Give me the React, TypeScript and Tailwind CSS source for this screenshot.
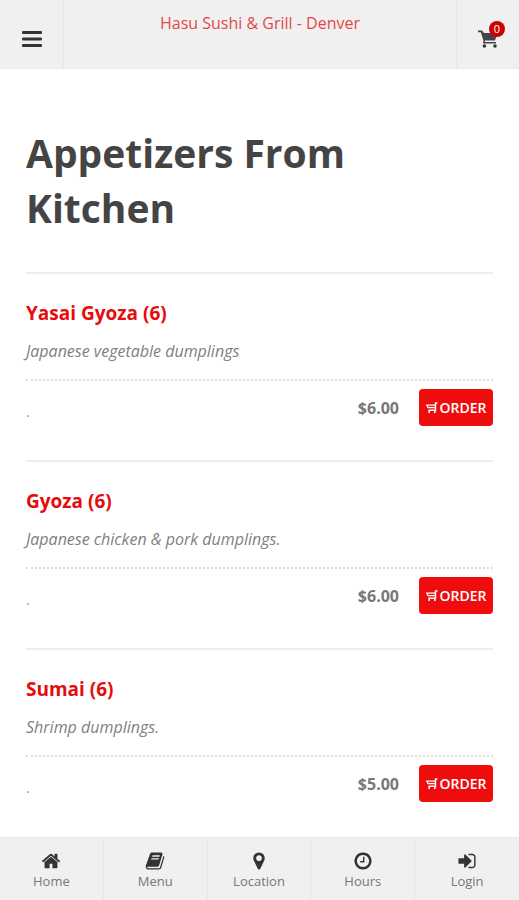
import type { ReactNode } from "react";

const dishes = [
  { name: "Yasai Gyoza (6)", note: "Japanese vegetable dumplings", price: "$6.00" },
  { name: "Gyoza (6)", note: "Japanese chicken & pork dumplings.", price: "$6.00" },
  { name: "Sumai (6)", note: "Shrimp dumplings.", price: "$5.00" },
];

const tabs = [
  {
    label: "Home",
    path: "M1472 992v480q0 26-19 45t-45 19h-384v-384h-256v384h-384q-26 0-45-19t-19-45v-480q0-1 .5-3t.5-3l575-474 575 474q1 2 1 6zm223-69l-62 74q-8 9-21 11h-3q-13 0-21-7l-692-577-692 577q-12 8-24 7-13-2-21-11l-62-74q-8-10-7-23.5t11-21.5l719-599q32-26 76-26t76 26l244 204v-195q0-14 9-23t23-9h192q14 0 23 9t9 23v408l219 182q10 8 11 21.5t-7 23.5z",
  },
  {
    label: "Menu",
    path: "M1703 478q40 57 18 129l-275 906q-19 64-76.5 107.5t-122.5 43.5h-923q-77 0-148.5-53.5t-99.5-131.5q-24-67-2-127 0-4 3-27t4-37q1-8-3-21.5t-3-19.5q2-11 8-21t16.5-23.5 16.5-23.5q23-38 45-91.5t30-91.5q3-10 .5-30t-.5-28q3-11 17-28t17-23q21-36 42-92t25-90q1-9-2.5-32t.5-28q4-13 22-30.5t22-22.5q19-26 42.5-84.5t27.5-96.5q1-8-3-25.5t-2-26.5q2-8 9-18t18-23 17-21q8-12 16.5-30.5t15-35 16-36 19.5-32 26.5-23.5 36-11.5 47.5 5.5l-1 3q38-9 51-9h761q74 0 114 56t18 130l-274 906q-36 119-71.5 153.5t-128.5 34.5h-869q-27 0-38 15-11 16-1 43 24 70 144 70h923q29 0 56-15.5t35-41.5l300-987q7-22 5-57 38 15 59 43zm-1064 2q-4 13 2 22.5t20 9.5h608q13 0 25.5-9.5t16.5-22.5l21-64q4-13-2-22.5t-20-9.5h-608q-13 0-25.5 9.5t-16.5 22.5zm-83 256q-4 13 2 22.5t20 9.5h608q13 0 25.5-9.5t16.5-22.5l21-64q4-13-2-22.5t-20-9.5h-608q-13 0-25.5 9.5t-16.5 22.5z",
  },
  {
    label: "Location",
    path: "M1152 640q0-106-75-181t-181-75-181 75-75 181 75 181 181 75 181-75 75-181zm256 0q0 109-33 179l-364 774q-16 33-47.5 52t-67.5 19-67.5-19-46.5-52l-365-774q-33-70-33-179 0-212 150-362t362-150 362 150 150 362z",
  },
  {
    label: "Hours",
    path: "M1024 544v448q0 14-9 23t-23 9h-320q-14 0-23-9t-9-23v-64q0-14 9-23t23-9h224v-352q0-14 9-23t23-9h64q14 0 23 9t9 23zm416 352q0-148-73-273t-198-198-273-73-273 73-198 198-73 273 73 273 198 198 273 73 273-73 198-198 73-273zm224 0q0 209-103 385.5t-279.5 279.5-385.5 103-385.5-103-279.5-279.5-103-385.5 103-385.5 279.5-279.5 385.5-103 385.5 103 279.5 279.5 103 385.5z",
  },
  {
    label: "Login",
    path: "M1312 896q0 26-19 45l-544 544q-19 19-45 19t-45-19-19-45v-288h-448q-26 0-45-19t-19-45v-384q0-26 19-45t45-19h448v-288q0-26 19-45t45-19 45 19l544 544q19 19 19 45zm352-352v704q0 119-84.5 203.5t-203.5 84.5h-320q-13 0-22.5-9.5t-9.5-22.5q0-4-1-20t-.5-26.5 3-23.5 10-19.5 20.5-6.5h320q66 0 113-47t47-113v-704q0-66-47-113t-113-47h-312l-11.5-1-11.5-3-8-5.5-7-9-2-13.5q0-4-1-20t-.5-26.5 3-23.5 10-19.5 20.5-6.5h320q119 0 203.5 84.5t84.5 203.5z",
  },
];

function HeaderButton({ label, children }: { label: string; children: ReactNode }) {
  return (
    <button type="button" aria-label={label} className="flex h-full w-full items-center justify-center pt-[10px]">
      {children}
    </button>
  );
}

function OrderCart() {
  return (
    <svg viewBox="0 0 12 12" className="size-3" fill="none" stroke="currentColor" aria-hidden="true">
      <path d="M11.5 1H9.5V8.2H2.5" strokeWidth="1.4" />
      <path d="M9 3.2H0.8L2 5.7H9" strokeWidth="1.2" />
      <path d="M3.2 8V11M8.8 8V11" strokeWidth="1.6" />
    </svg>
  );
}

export default function App() {
  return (
    <div className="flex h-screen flex-col bg-white font-['Open_Sans',sans-serif] text-[#777]">
      <header className="flex h-[69px] shrink-0 border-b border-[#ebebeb] bg-[#f0f0f0]">
        <div className="w-16 border-r border-[#e6e6e6]">
          <HeaderButton label="Open menu">
            <svg viewBox="0 0 20 18" className="h-[18px] w-5" fill="#333" aria-hidden="true">
              <rect y="1" width="20" height="3" rx="1" />
              <rect y="7.5" width="20" height="3" rx="1" />
              <rect y="14" width="20" height="3" rx="1" />
            </svg>
          </HeaderButton>
        </div>
        <p className="flex-1 pt-[11px] text-center text-base text-[#e34848]">
          Hasu Sushi &amp; Grill - Denver
        </p>
        <div className="w-[63px] border-l border-[#e6e6e6]">
          <HeaderButton label="Cart, 0 items">
            <span className="relative">
              <svg viewBox="0 0 20 20" className="size-5" aria-hidden="true">
                <path d="M0 1.5H4L6 4H19.5L17 11.5H7L6.6 13H18V14.5H5L5.4 11.5L2.8 3.2H0Z" fill="#444" />
                <circle cx="6.4" cy="17" r="1.8" fill="#333" />
                <circle cx="17" cy="17" r="1.8" fill="#333" />
              </svg>
              <span className="absolute -top-2 left-[11px] flex size-4 items-center justify-center rounded-full bg-[#cc0000] text-[11px] text-white">
                0
              </span>
            </span>
          </HeaderButton>
        </div>
      </header>

      <main className="min-h-0 flex-1 overflow-hidden px-[26px] pt-14">
        <h1 className="pb-[37px] text-[39px] leading-[55px] font-bold text-[#444]">Appetizers From Kitchen</h1>
        {dishes.map((dish) => (
          <section key={dish.name} className="border-t-2 border-[#eee] pt-[23px] pb-[34px]">
            <h2 className="text-[19px] leading-8 font-bold text-[#e60c0c]">{dish.name}</h2>
            <p className="mt-[10px] pb-4 text-base leading-6 text-[#808080] italic">{dish.note}</p>
            <div className="flex items-center border-t-2 border-dotted border-[#ddd] pt-2">
              <span className="pt-2 text-sm text-[#999]">.</span>
              <span className="ml-auto text-base font-bold">{dish.price}</span>
              <button
                type="button"
                className="ml-5 flex h-[37px] w-[74px] items-center justify-center gap-[2px] rounded bg-[#ee0c0c] text-sm font-semibold text-white"
              >
                <OrderCart />
                ORDER
              </button>
            </div>
          </section>
        ))}
      </main>

      <nav className="grid h-[63px] shrink-0 grid-cols-5 border-t border-[#e8e8e8] bg-[#f0f0f0]">
        {tabs.map((tab) => (
          <a
            key={tab.label}
            href={"#" + tab.label.toLowerCase()}
            className="flex flex-col items-center border-r border-[#e6e6e6] pt-[13px] text-[13px] leading-5 text-[#777] last:border-r-0"
          >
            <svg viewBox="0 0 1792 1792" className="size-5" fill="#333" aria-hidden="true">
              <path d={tab.path} />
            </svg>
            {tab.label}
          </a>
        ))}
      </nav>
    </div>
  );
}
